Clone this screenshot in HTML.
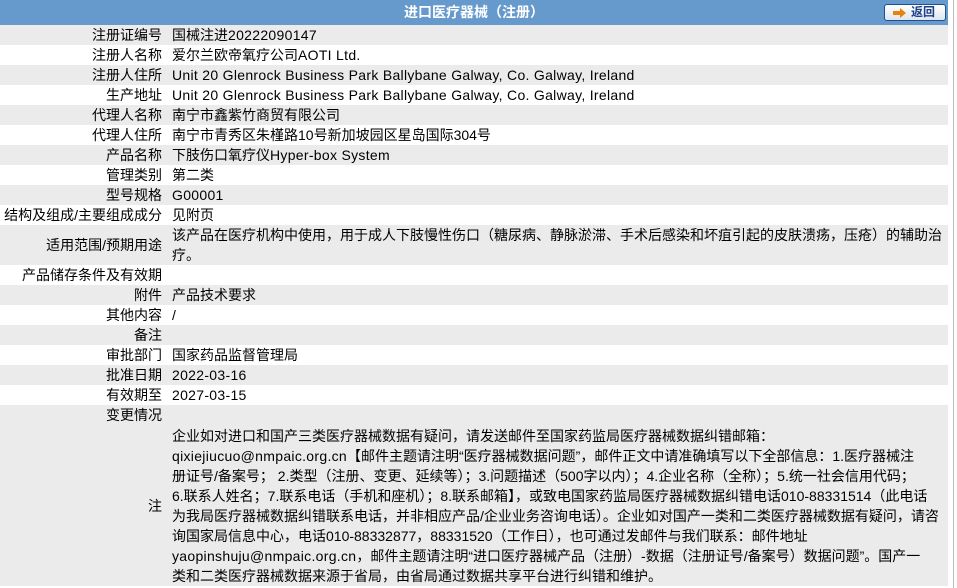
<!DOCTYPE html>
<html><head><meta charset="utf-8"><style>
body{margin:0;background:#fff;font-family:"Liberation Sans","Noto Sans CJK SC",sans-serif;font-size:14px;color:#000;width:957px;height:588px;overflow:hidden;position:relative}
.hd{position:absolute;left:0;top:0;width:948px;height:25px;background:#6699cc;color:#fff;font-weight:bold;text-align:center;line-height:25px;font-size:14px}
.btn{position:absolute;left:884px;top:4px;width:62px;height:17px;box-sizing:border-box;border:1px solid #1f4f8f;border-radius:3px;background:linear-gradient(#fff,#dfe6ef);color:#1d3f8a;font-weight:bold;line-height:15px;font-size:12px}
.row{position:absolute;left:0;width:948px;display:flex;line-height:20px}
.g{background:#ebebeb}
.l{width:162px;text-align:right;flex:none;white-space:nowrap}
.v{padding-left:10px;width:776px;white-space:nowrap}
.e{letter-spacing:0.3px}
.sb{position:absolute;left:953px;top:0;width:1px;height:588px;background:#bbb}
</style></head><body>
<div class="hd">进口医疗器械（注册）</div>
<div class="btn"><svg style="position:absolute;left:7px;top:2px" width="16" height="12"><path d="M1 4h7V1l6 5-6 5V8H1z" fill="#e8820c"/></svg><span style="position:absolute;left:26px;top:0">返回</span></div>
<div class="row g" style="top:25px"><div class="l">注册证编号</div><div class="v">国械注进<span class="e">20222090147</span></div></div>
<div class="row" style="top:45px"><div class="l">注册人名称</div><div class="v">爱尔兰欧帝氧疗公司<span class="e">AOTI Ltd.</span></div></div>
<div class="row g" style="top:65px"><div class="l">注册人住所</div><div class="v e">Unit 20 Glenrock Business Park Ballybane Galway, Co. Galway, Ireland</div></div>
<div class="row" style="top:85px"><div class="l">生产地址</div><div class="v e">Unit 20 Glenrock Business Park Ballybane Galway, Co. Galway, Ireland</div></div>
<div class="row g" style="top:105px"><div class="l">代理人名称</div><div class="v">南宁市鑫紫竹商贸有限公司</div></div>
<div class="row" style="top:125px"><div class="l">代理人住所</div><div class="v">南宁市青秀区朱槿路10号新加坡园区星岛国际304号</div></div>
<div class="row g" style="top:145px"><div class="l">产品名称</div><div class="v">下肢伤口氧疗仪<span class="e">Hyper-box System</span></div></div>
<div class="row" style="top:165px"><div class="l">管理类别</div><div class="v">第二类</div></div>
<div class="row g" style="top:185px"><div class="l">型号规格</div><div class="v e">G00001</div></div>
<div class="row" style="top:205px"><div class="l">结构及组成/主要组成成分</div><div class="v">见附页</div></div>
<div class="row g" style="top:225px;height:40px;align-items:center"><div class="l">适用范围/预期用途</div><div class="v">该产品在医疗机构中使用，用于成人下肢慢性伤口（糖尿病、静脉淤滞、手术后感染和坏疽引起的皮肤溃疡，压疮）的辅助治<br>疗。</div></div>
<div class="row" style="top:265px"><div class="l">产品储存条件及有效期</div><div class="v"></div></div>
<div class="row g" style="top:285px"><div class="l">附件</div><div class="v">产品技术要求</div></div>
<div class="row" style="top:305px"><div class="l">其他内容</div><div class="v">/</div></div>
<div class="row g" style="top:325px"><div class="l">备注</div><div class="v"></div></div>
<div class="row" style="top:345px"><div class="l">审批部门</div><div class="v">国家药品监督管理局</div></div>
<div class="row g" style="top:365px"><div class="l">批准日期</div><div class="v e">2022-03-16</div></div>
<div class="row" style="top:385px"><div class="l">有效期至</div><div class="v e">2027-03-15</div></div>
<div class="row g" style="top:405px"><div class="l">变更情况</div><div class="v"></div></div>
<div class="row g" style="top:425px;height:161px;align-items:center"><div class="l">注</div><div class="v">企业如对进口和国产三类医疗器械数据有疑问，请发送邮件至国家药监局医疗器械数据纠错邮箱：<br><span class="e">qixiejiucuo@nmpaic.org.cn</span>【邮件主题请注明“医疗器械数据问题”，邮件正文中请准确填写以下全部信息：1.医疗器械注<br>册证号/备案号； 2.类型（注册、变更、延续等）；3.问题描述（500字以内）；4.企业名称（全称）；5.统一社会信用代码；<br>6.联系人姓名；7.联系电话（手机和座机）；8.联系邮箱】，或致电国家药监局医疗器械数据纠错电话010-88331514（此电话<br>为我局医疗器械数据纠错联系电话，并非相应产品/企业业务咨询电话）。企业如对国产一类和二类医疗器械数据有疑问，请咨<br>询国家局信息中心，电话010-88332877，88331520（工作日），也可通过发邮件与我们联系：邮件地址<br><span class="e">yaopinshuju@nmpaic.org.cn</span>，邮件主题请注明“进口医疗器械产品（注册）-数据（注册证号/备案号）数据问题”。国产一<br>类和二类医疗器械数据来源于省局，由省局通过数据共享平台进行纠错和维护。</div></div>
<div class="sb"></div>
</body></html>
